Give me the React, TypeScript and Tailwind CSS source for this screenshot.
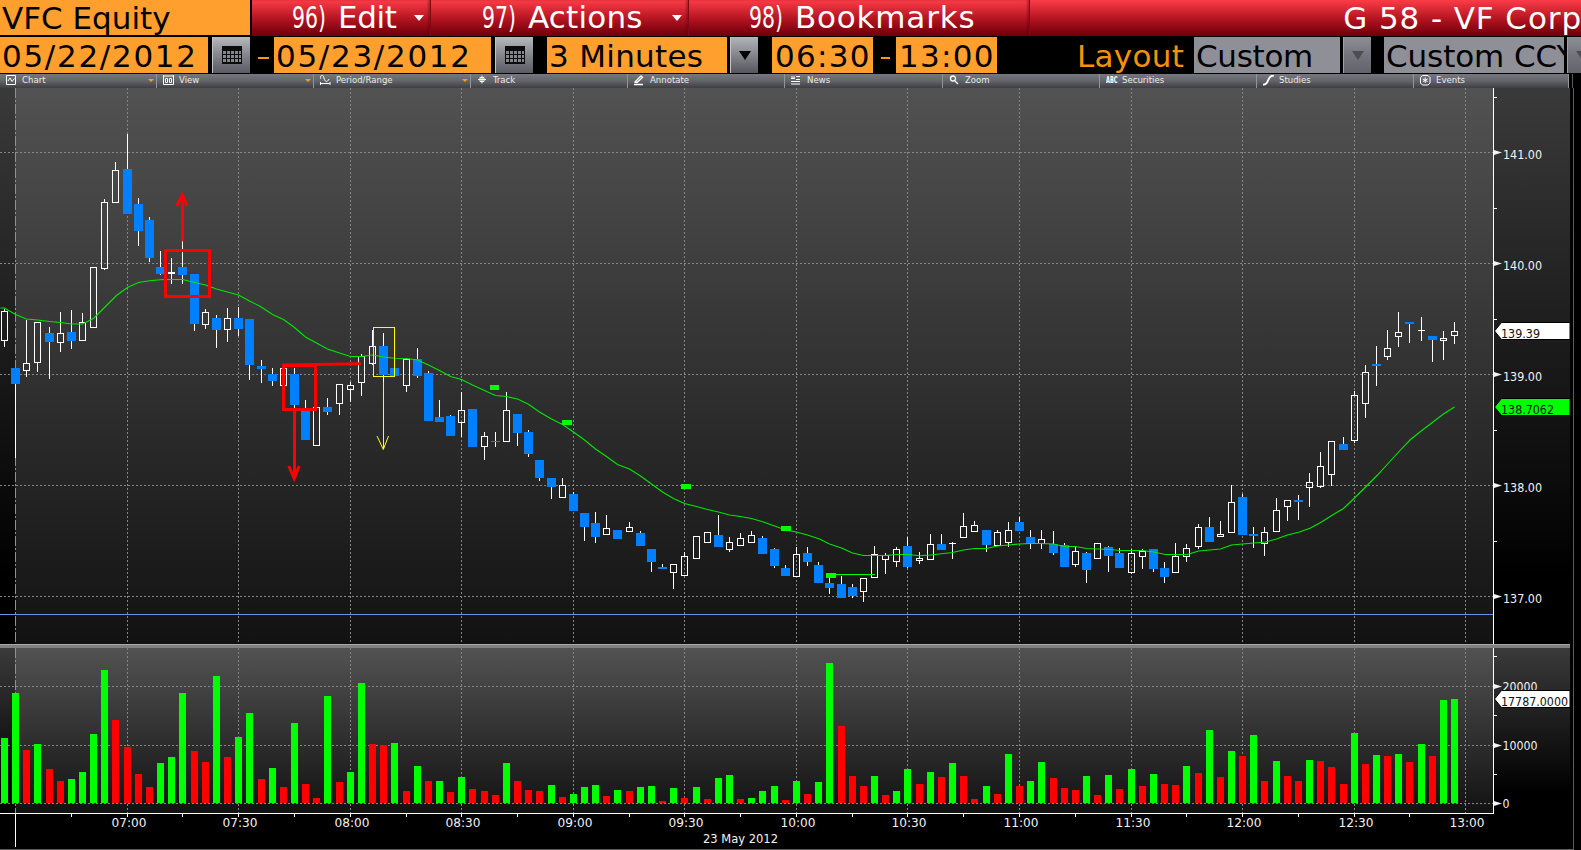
import { type ReactNode } from 'react';
import clsx from 'clsx';

type Candle = [high: number, top: number, bottom: number, low: number, up: 0 | 1];

// one row per 3 minute bar, starting at 06:27
const candles: Candle[] = [
  [309, 311, 341, 347, 1], [368, 368, 384, 458, 0], [320, 363, 371, 377, 1], [322, 322, 363, 372, 1],
  [327, 333, 342, 379, 0], [312, 333, 343, 352, 1], [310, 332, 341, 349, 0], [313, 322, 341, 341, 1],
  [267, 267, 328, 328, 1], [199, 202, 269, 270, 1], [162, 170, 203, 203, 1], [134, 169, 214, 214, 0],
  [198, 204, 231, 246, 0], [217, 220, 258, 262, 0], [251, 267, 274, 275, 0], [258, 272, 274, 284, 1],
  [241, 267, 275, 284, 0], [274, 274, 324, 331, 0], [309, 312, 325, 329, 1], [315, 318, 330, 348, 0],
  [308, 318, 330, 342, 1], [307, 318, 329, 336, 0], [319, 319, 365, 380, 0], [360, 366, 369, 383, 0],
  [368, 374, 381, 386, 0], [368, 368, 386, 386, 1], [368, 374, 405, 408, 0], [400, 410, 440, 440, 0],
  [407, 407, 446, 446, 1], [398, 407, 412, 415, 0], [384, 384, 404, 415, 1], [382, 385, 390, 402, 1],
  [354, 356, 383, 396, 1], [330, 346, 364, 365, 1], [333, 346, 375, 382, 0], [368, 368, 376, 376, 0],
  [359, 359, 386, 392, 1], [348, 359, 376, 378, 0], [371, 373, 421, 421, 0], [400, 417, 422, 422, 0],
  [415, 416, 436, 436, 0], [392, 410, 423, 437, 1], [409, 409, 447, 447, 0], [432, 436, 447, 460, 1],
  [432, 441, 442, 447, 0], [392, 410, 442, 442, 1], [414, 414, 433, 446, 0], [430, 432, 454, 457, 0],
  [460, 460, 478, 481, 0], [478, 478, 487, 499, 0], [478, 485, 498, 498, 1], [492, 494, 511, 511, 0],
  [513, 513, 527, 541, 0], [512, 523, 537, 543, 0], [515, 528, 535, 535, 1], [530, 530, 539, 539, 0],
  [522, 527, 532, 532, 1], [531, 533, 546, 546, 0], [549, 549, 562, 572, 0], [564, 567, 569, 569, 0],
  [564, 564, 573, 589, 1], [552, 556, 576, 576, 1], [536, 536, 559, 559, 1], [532, 532, 543, 543, 1],
  [515, 535, 547, 547, 0], [537, 542, 550, 552, 1], [533, 538, 546, 546, 1], [531, 535, 543, 543, 1],
  [536, 538, 554, 554, 0], [548, 549, 566, 568, 0], [565, 568, 576, 576, 0], [547, 554, 577, 577, 1],
  [547, 553, 562, 566, 0], [562, 565, 583, 583, 0], [578, 583, 588, 594, 0], [576, 584, 598, 598, 0],
  [584, 587, 596, 598, 0], [578, 578, 592, 602, 1], [546, 554, 578, 578, 1], [553, 555, 560, 574, 1],
  [547, 549, 562, 567, 1], [537, 546, 567, 568, 0], [552, 558, 561, 564, 1], [534, 544, 560, 560, 1],
  [534, 544, 550, 550, 0], [542, 543, 544, 559, 1], [513, 526, 538, 538, 1], [521, 525, 532, 532, 1],
  [530, 530, 545, 552, 0], [530, 532, 546, 546, 1], [522, 530, 543, 547, 1], [517, 522, 531, 531, 0],
  [530, 537, 544, 549, 0], [530, 539, 544, 549, 1], [531, 544, 553, 555, 0], [543, 545, 567, 567, 0],
  [546, 551, 565, 567, 1], [552, 553, 570, 583, 0], [543, 543, 559, 559, 1], [546, 547, 556, 572, 0],
  [548, 553, 568, 568, 0], [549, 553, 573, 574, 1], [549, 551, 557, 569, 1], [549, 549, 569, 572, 0],
  [562, 568, 577, 583, 0], [543, 556, 573, 573, 1], [544, 548, 557, 562, 1], [524, 527, 547, 549, 1],
  [517, 527, 542, 542, 0], [521, 534, 537, 537, 1], [485, 502, 533, 533, 1], [494, 497, 535, 535, 0],
  [527, 534, 536, 548, 0], [527, 532, 544, 556, 1], [498, 510, 532, 532, 1], [500, 500, 507, 521, 1],
  [495, 500, 502, 520, 0], [473, 482, 488, 507, 1], [452, 466, 487, 488, 1], [441, 441, 475, 486, 1],
  [437, 444, 450, 450, 0], [391, 395, 441, 443, 1], [365, 372, 404, 418, 1], [346, 364, 366, 386, 0],
  [330, 348, 357, 360, 1], [312, 332, 337, 347, 1], [322, 322, 324, 343, 0], [317, 330, 331, 341, 1],
  [336, 336, 340, 362, 0], [331, 338, 341, 360, 1], [322, 331, 336, 344, 1],
];

// top of each volume bar, negative when the bar is red
const volumes = [
  738, 693, -750, 744, -769, -781, 779, 772, 734, 670, -720, -747, -774, -787, 763, 757, 693, -751, -762, 676,
  -757, 737, 713, -779, 768, -787, 723, -784, -798, 696, -782, 772, 683, -744, -745, 743, -791, 766, -781, 781,
  -792, 777, -789, -791, -795, 763, -781, -790, -791, 785, -797, 794, 787, 785, -796, 790, -791, 787, 786, -801,
  788, -798, 787, -799, 778, 775, -799, 798, 791, 786, -800, 781, -794, 782, 663, -726, -776, -786, 776, -795,
  791, 769, -784, 772, -777, 763, -776, -799, 786, -794, 754, -786, 781, 762, -778, -788, -790, 776, -795, 775,
  -789, 769, -786, 774, -784, -785, 766, -773, 730, -777, 751, -756, 735, -781, 761, -776, -781, 760, -761, -767,
  -784, 733, -764, 755, -756, 754, -762, 744, -756, 700, 699,
];

const average =
  '0,308 4,308 15,314.5 26,319 37,320 49,321.5 60,322.5 71,324 82,324 93,318.5 104,307.5 116,295.5 127,287.5 138,282.5 149,280.7 160,279.7 171,279.5 182,279.5 194,282.5 205,285 216,289 227,292 238,295 249,301 260,306.5 272,314.5 283,319.5 294,327.5 305,337 316,343 327,349 339,353 350,356.5 361,356.5 372,355 383,357 394,358.3 406,358.5 417,360 428,365 439,370.5 450,376.5 461,379.5 472,385 484,390.5 495,395.5 506,396.5 517,399 528,404.3 539,412 551,419 562,424.5 573,432 584,440 595,449 606,456.5 617,464.5 629,469 640,476 651,484 662,492 673,498.5 684,503.5 696,506.5 707,509.5 718,512 729,515 740,516.5 751,518.5 763,522 774,526 785,530 796,532 807,535 819,539 829,544 841,548 852,553 863,555.5 885,555.5 896,554.5 907,554.5 919,555.8 930,555 941,553.8 952,552.5 963,550 974,548.5 986,548.5 997,546 1008,545 1019,544 1030,543.5 1041,543.5 1053,544 1064,546.5 1075,546.5 1086,548.5 1109,549.5 1120,550.5 1142,550.5 1153,552 1165,554.5 1187,554.5 1198,551 1220,549 1231,545 1265,542 1276,539 1287,535 1299,532 1310,528 1321,522 1332,515 1343,508.5 1354,498 1377,475 1388,463 1399,451 1410,439.5 1422,430 1443,414 1454,407';

const FIRST = -11;
// left pixel of the bar's centre column, counted from 07:00
const barX = (k: number) => Math.floor(127.15 + k * 11.155);

const times = ['07:00', '07:30', '08:00', '08:30', '09:00', '09:30', '10:00', '10:30', '11:00', '11:30', '12:00', '12:30', '13:00'];

const priceTicks: [string, number][] = [['141.00', 152], ['140.00', 263], ['139.00', 374], ['138.00', 485], ['137.00', 596]];
const volumeTicks: [string, number, number][] = [['20000', 686, 35], ['10000', 745, 35], ['0', 803, 7]];

interface TagProps {
  y: number;
  text: string;
  width: number;
  fill: string;
}

const Tag = ({ y, text, width, fill }: TagProps) => (
  <g>
    <path d={`M1494.5 ${y + 8}L1501.5 ${y - 0.5}H1570V${y + 16.5}H1501.5Z`} fill={fill} stroke="#000" />
    <text x={1501} y={y + 14.5} textLength={width} lengthAdjust="spacingAndGlyphs" fill="#111">
      {text}
    </text>
  </g>
);

const Grid = () => (
  <g stroke="#868686" strokeDasharray="2 2" shapeRendering="crispEdges">
    {priceTicks.map(([label, y]) => (
      <path key={label} d={`M0 ${y + 0.5}H1493`} />
    ))}
    {volumeTicks.map(([label, y]) => (
      <path key={label} d={`M0 ${y + 0.5}H1493`} />
    ))}
    {times.map((time, i) => (
      <path key={time} d={`M${barX(i * 10) + 0.5} 88V644M${barX(i * 10) + 0.5} 648V813`} />
    ))}
    <path d="M15.5 88V644M15.5 648V813" strokeDasharray="10 2 2 2" stroke="#909090" />
  </g>
);

const Candles = () => (
  <g shapeRendering="crispEdges">
    {candles.map(([high, top, bottom, low, up], i) => {
      const x = barX(i + FIRST);
      const h = bottom - top;
      return (
        <g key={i}>
          {high < top && <rect x={x} y={high} width={1} height={top - high} fill="#fff" />}
          {low > bottom && <rect x={x} y={bottom} width={1} height={low - bottom} fill="#fff" />}
          {!up && <rect x={x - 4} y={top} width={9} height={h} fill="#0080ff" />}
          {up === 1 && h < 3 && <rect x={x - 3} y={top} width={7} height={h} fill="#fff" />}
          {up === 1 && h >= 3 && (
            <rect x={x - 2.5} y={top + 0.5} width={6} height={h - 1} fill="none" stroke="#fff" />
          )}
        </g>
      );
    })}
  </g>
);

const Volume = () => (
  <g shapeRendering="crispEdges">
    {volumes.map((v, i) => (
      <rect
        key={i}
        x={barX(i + FIRST) - 3}
        y={Math.abs(v)}
        width={7}
        height={803 - Math.abs(v)}
        fill={v > 0 ? '#00ff00' : '#ff0000'}
      />
    ))}
  </g>
);

const Annotations = () => (
  <g fill="none">
    <g stroke="#ff0000" strokeWidth={3}>
      <rect x={165.5} y={250.5} width={44} height={46} />
      <path d="M182.5 241.5V195M176.8 206L182.2 195L187.2 206" />
      <rect x={283.5} y={365.5} width={32} height={44} />
      <path d="M283 365L361 363.7M294.5 410V479M288.8 466L294.2 478.500L299.2 466" />
    </g>
    <g stroke="#ffff00">
      <rect x={373.5} y={327.5} width={21} height={49} />
      <path d="M383.5 382V449M377 436L383.3 449.5L388.5 436" />
    </g>
    <g fill="#00ff00" shapeRendering="crispEdges">
      <rect x={490} y={385} width={9} height={5} />
      <rect x={562} y={420} width={10} height={5} />
      <rect x={681} y={484} width={10} height={5} />
      <rect x={781} y={526} width={10} height={5} />
      <rect x={826} y={573} width={10} height={5} />
      <rect x={836} y={574} width={39} height={1} />
    </g>
  </g>
);

const Chart = () => (
  <svg
    className="block shrink-0"
    width={1581}
    height={762}
    viewBox="0 88 1581 762"
    fontFamily="'DejaVu Sans Condensed', 'DejaVu Sans', sans-serif"
    fontSize={13}
  >
    <defs>
      <linearGradient id="plot" x2="0" y2="1">
        <stop offset="0" stopColor="#525252" />
        <stop offset="1" stopColor="#121212" />
      </linearGradient>
      <linearGradient id="margin" x2="0" y2="1">
        <stop offset="0" stopColor="#3a3a3a" />
        <stop offset="0.88" stopColor="#000" />
      </linearGradient>
    </defs>
    <rect y={88} width={1581} height={762} fill="#000" />
    <rect y={88} width={1570} height={556} fill="url(#margin)" />
    <rect x={15} y={88} width={1478} height={556} fill="url(#plot)" />
    <rect y={648} width={1570} height={165} fill="url(#margin)" />
    <rect x={15} y={648} width={1478} height={165} fill="url(#plot)" />
    <Grid />
    <rect y={614} width={1493} height={1} fill="#6495ed" />
    <Volume />
    <Candles />
    <polyline points={average} transform="translate(.5 0)" fill="none" stroke="#00e800" strokeWidth={1.1} />
    <Annotations />

    <rect y={644} width={1570} height={1} fill="#a8a8a8" />
    <rect y={645} width={1570} height={3} fill="#808080" />

    {/* axes */}
    <g fill="#fff" shapeRendering="crispEdges">
      <rect x={1493} y={88} width={1} height={556} />
      <rect x={1493} y={648} width={1} height={166} />
      <rect y={813} width={1494} height={1} />
      <rect x={15} y={813} width={1} height={34} />
      {[97, 208, 319, 430, 541, 656, 715, 774].map((y) => (
        <rect key={y} x={1494} y={y} width={3} height={1} />
      ))}
      {Array.from({ length: 25 }, (_, i) => (
        <rect key={i} x={barX(i * 5 - 5)} y={814} width={1} height={3} />
      ))}
    </g>
    <g fill="#f2f2f2">
      {priceTicks.map(([label, y]) => (
        <g key={label}>
          <path d={`M1494 ${y - 2}L1502 ${y + 0.5}L1494 ${y + 3}Z`} />
          <text x={1503} y={y + 6.5} textLength={39} lengthAdjust="spacingAndGlyphs">
            {label}
          </text>
        </g>
      ))}
      {volumeTicks.map(([label, y, width]) => (
        <g key={label}>
          <path d={`M1494 ${y - 2}L1502 ${y + 0.5}L1494 ${y + 3}Z`} />
          <text x={1502.5} y={y + 5.4} textLength={width} lengthAdjust="spacingAndGlyphs">
            {label}
          </text>
        </g>
      ))}
      {times.map((time, i) => (
        <text key={time} x={barX(i * 10) - 15.5} y={827.4} textLength={35} lengthAdjust="spacingAndGlyphs">
          {time}
        </text>
      ))}
      <text x={703} y={843.4} textLength={75} lengthAdjust="spacingAndGlyphs">
        23 May 2012
      </text>
    </g>
    <Tag y={323} text="139.39" width={39} fill="#fff" />
    <Tag y={399} text="138.7062" width={53} fill="#00ff00" />
    <Tag y={691} text="17787.0000" width={67} fill="#fff" />
    <path d="M1573.5 88V849.5M0 849.5H1573.5" stroke="#5c5c5c" shapeRendering="crispEdges" />
  </svg>
);

interface MenuProps {
  code: string;
  label: string;
  className: string;
  labelClass?: string;
  arrow?: boolean;
}

const Menu = ({ code, label, className, labelClass, arrow }: MenuProps) => (
  <div
    className={clsx(
      'flex h-9 shrink-0 border-r border-[#7d0a16] leading-[34px] text-white shadow-[inset_-2px_0_2px_rgba(90,0,10,0.35)]',
      className,
    )}
  >
    <span className="w-[46px] shrink-0">
      <span className="inline-block origin-left scale-x-[0.66]">{code}</span>
    </span>
    <span className={labelClass}>{label}</span>
    {arrow && (
      <span className="mt-[15px] mr-[6px] ml-auto h-0 w-0 border-x-[5px] border-t-[6px] border-x-transparent border-t-white" />
    )}
  </div>
);

const Field = ({ className, children }: { className: string; children: ReactNode }) => (
  <div className={clsx('h-9 shrink-0 pl-0.5 leading-[38px]', className)}>{children}</div>
);

const Dash = ({ className }: { className: string }) => (
  <div className={clsx('mt-5 h-[2px] shrink-0 bg-[#f59a12]', className)} />
);

const CalendarButton = () => (
  <div className="ml-1 flex h-9 w-[38px] shrink-0 items-center justify-center border-l border-[#c4c4ca] bg-linear-to-b from-[#b9b9bf] via-[#85858d] to-[#5b5b63]">
    <svg width="20" height="18" viewBox="0 0 20 18" shapeRendering="crispEdges">
      <rect width="20" height="18" fill="#0c0c0c" />
      {[5, 9, 13].map((y) =>
        [1, 5, 9, 13, 17].map((x) => (
          <rect key={`${x}-${y}`} x={x} y={y} width={x === 17 ? 2 : 3} height="3" fill="#85858c" />
        )),
      )}
    </svg>
  </div>
);

const DropButton = ({ dim }: { dim?: boolean }) => (
  <div
    className={clsx(
      'ml-[3px] flex h-9 w-[28px] shrink-0 items-center justify-center border-l bg-linear-to-b',
      dim
        ? 'border-[#a0a0a8] from-[#8e8e96] via-[#74747c] to-[#63636b]'
        : 'border-[#c4c4ca] from-[#b4b4ba] via-[#85858d] to-[#56565e]',
    )}
  >
    <span
      className={clsx(
        'h-0 w-0 border-x-[6px] border-t-[9px] border-x-transparent',
        dim ? 'border-t-[#4c4c52]' : 'border-t-black',
      )}
    />
  </div>
);

const icons: Record<string, ReactNode> = {
  Chart: <path d="M.5 .5H9.500V9.500H.5ZM2 6L4 3L6 6.500L8.500 3.500" />,
  View: <path d="M0 1H11M.5 0V9.500H10.500V0M2.500 3.500H4.500V7.500H2.500ZM6.500 3.500H8.500V7.500H6.500Z" />,
  'Period/Range': <path d="M0 4C1 -1 3 -1 4 3S7 8 9 4M.5 7V10M10 7V10M1 8.500H9.500" />,
  Track: <path d="M5 .5V8.500M1 4.500H9M3 2.500H7V6.500H3Z" />,
  Annotate: <path d="M1 7L7 1L8.500 2.500L3 7.500ZM0 9.500H9" strokeWidth={1.3} />,
  News: <path d="M0 2H4M0 3.500H4M5 1.500H9M5 4.500H9M0 6.500H9M0 9H9" />,
  Zoom: <path d="M1.500 3.500A2.500 2.500 0 1 0 6.500 3.500A2.500 2.500 0 1 0 1.500 3.500M6 6L9 9" strokeWidth={1.3} />,
  Studies: <path d="M0 9.500C7 10.500 3 0 11 .5" strokeWidth={1.8} />,
  Events: <path d="M2.500 .5H8L10 2.500V8L8 10H2.500L.5 8V2.500ZM5.200 2.500V8M2.800 4L7.600 6.600M7.600 4L2.800 6.600" />,
};

const tools = [
  { name: 'Chart', width: 'w-[157px]', arrow: true },
  { name: 'View', width: 'w-[157px]', arrow: true },
  { name: 'Period/Range', width: 'w-[157px]', arrow: true },
  { name: 'Track', width: 'w-[157px]' },
  { name: 'Annotate', width: 'w-[157px]' },
  { name: 'News', width: 'w-[158px]' },
  { name: 'Zoom', width: 'w-[157px]' },
  { name: 'Securities', width: 'w-[157px]' },
  { name: 'Studies', width: 'w-[157px]' },
  { name: 'Events', width: 'w-[155px]' },
];

const Toolbar = () => (
  <div className="mt-px flex h-[14px] shrink-0 font-['DejaVu_Sans_Condensed','DejaVu_Sans',sans-serif] text-[9.5px] tracking-normal text-[#ececec]">
    {tools.map(({ name, width, arrow }) => (
      <div
        key={name}
        className={clsx(
          'flex h-full shrink-0 items-center border-r border-[#94949a] bg-linear-to-b from-[#777780] via-[#63636a] to-[#3e3e44] pb-[2px] pl-[6px] last:border-r-0',
          width,
        )}
      >
        {name === 'Securities' ? (
          <span className="w-[16px]">
            <span className="inline-block origin-left scale-x-[0.7] text-[8px] leading-[12px] font-bold text-white">
              ABC
            </span>
          </span>
        ) : (
          <svg className="mr-[5px] shrink-0" width="11" height="11" viewBox="0 0 11 11" fill="none" stroke="#fff">
            {icons[name]}
          </svg>
        )}
        <span className="leading-[12px]">{name}</span>
        {arrow && (
          <span className="mr-[2px] ml-auto h-0 w-0 border-x-[3px] border-t-[3px] border-x-transparent border-t-[#f5a010]" />
        )}
      </div>
    ))}
    <div className="ml-[3px] w-px bg-[#5c5c5c]" />
  </div>
);

const App = () => (
  <div className="flex h-[850px] w-[1581px] flex-col overflow-hidden bg-black font-['DejaVu_Sans',sans-serif] text-[31px] whitespace-pre text-black">
    <div className="flex h-9 shrink-0">
      <div className="mr-[2px] h-[35px] w-[250px] shrink-0 bg-[#ff9f2d] pl-0.5 leading-[37px]">VFC Equity</div>
      <div className="flex min-w-0 flex-1 bg-linear-to-b from-[#fb3c48] via-[#b81522] to-[#6d0009]">
        <Menu code="96)" label="Edit" className="w-[179px] pl-[40px]" labelClass="tracking-[-0.4px]" arrow />
        <Menu code="97)" label="Actions" className="w-[258px] pl-[51px]" labelClass="tracking-[0.2px]" arrow />
        <Menu code="98)" label="Bookmarks" className="w-[341px] pl-[60px]" labelClass="tracking-[0.8px]" />
        <div className="mr-[-1px] ml-auto leading-[37px] tracking-[0.9px] text-white">G 58 - VF Corp</div>
      </div>
    </div>
    <div className="mt-px flex h-9 shrink-0 overflow-hidden">
      <Field className="w-[208px] bg-[#ff9f2d] tracking-[1.7px]">05/22/2012</Field>
      <CalendarButton />
      <Dash className="ml-2 w-[11px]" />
      <Field className="ml-[5px] w-[217px] bg-[#ff9f2d] tracking-[1.7px]">05/23/2012</Field>
      <CalendarButton />
      <Field className="ml-[14px] w-[180px] bg-[#ff9f2d] tracking-[0.3px]">3 Minutes</Field>
      <DropButton />
      <Field className="ml-[14px] w-[101px] bg-[#ff9f2d] pl-[3px] tracking-[1.3px]">06:30</Field>
      <Dash className="ml-2 w-[9px]" />
      <Field className="ml-[6px] w-[101px] bg-[#ff9f2d] pl-[3px] tracking-[1.3px]">13:00</Field>
      <div className="ml-[80px] w-[117px] shrink-0 leading-[38px] tracking-[0.3px] text-[#f59208]">Layout</div>
      <Field className="w-[146px] bg-[#8f8f97] tracking-[-0.3px]">Custom</Field>
      <DropButton dim />
      <Field className="ml-[13px] w-[180px] overflow-hidden bg-[#8f8f97] tracking-[-0.1px]">Custom CCY</Field>
      <DropButton dim />
    </div>
    <Toolbar />
    <Chart />
  </div>
);

export default App;
